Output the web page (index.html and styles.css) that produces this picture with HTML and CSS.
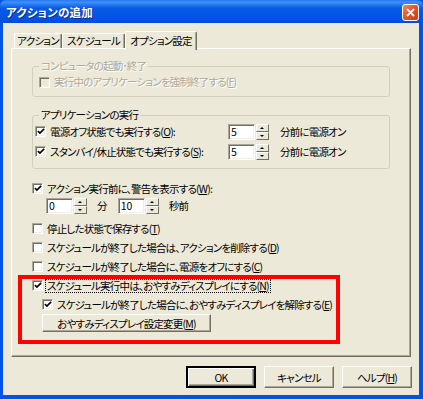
FILE: index.html
```html
<!DOCTYPE html>
<html lang="ja">
<head>
    <meta charset="UTF-8">
    <title>アクションの追加</title>
    <link rel="stylesheet" href="styles.css">
</head>
<body>
    <div class="window">
        <div class="titlebar">
            <span class="title">アクションの追加</span>
            <span class="close">
                <svg width="9" height="9" viewBox="0 0 9 9"><path d="M1 1 L8 8 M8 1 L1 8" stroke="#fff" stroke-width="1.8"/></svg>
            </span>
        </div>

        <div class="client">
            <div class="tabs">
                <div class="tab tab-1">アクション</div>
                <div class="tab tab-2">スケジュール</div>
                <div class="tab active">オプション設定</div>
            </div>

            <div class="panel">
                <!-- 無効なグループ -->
                <fieldset class="group group-off">
                    <legend>コンピュータの起動･終了</legend>
                    <div class="row indent-2">
                        <span class="cb off"></span>
                        <span class="text">実行中のアプリケーションを強制終了する(<u>F</u>)</span>
                    </div>
                </fieldset>

                <fieldset class="group group-app">
                    <legend>アプリケーションの実行</legend>
                    <div class="row spin-row">
                        <div class="label">
                            <span class="cb"><svg width="9" height="9" viewBox="0 0 9 9"><path d="M1 4 L3.3 6.3 L8 1.6" stroke="#000" stroke-width="1.9" fill="none"/></svg></span>
                            <span class="text">電源オフ状態でも実行する(<u>O</u>):</span>
                        </div>
                        <div class="spin"><span class="spin-input">5</span><span class="spin-btns"><i class="up"></i><i class="down"></i></span></div>
                        <span class="after">分前に電源オン</span>
                    </div>
                    <div class="row spin-row">
                        <div class="label">
                            <span class="cb"><svg width="9" height="9" viewBox="0 0 9 9"><path d="M1 4 L3.3 6.3 L8 1.6" stroke="#000" stroke-width="1.9" fill="none"/></svg></span>
                            <span class="text">スタンバイ/休止状態でも実行する(<u>S</u>):</span>
                        </div>
                        <div class="spin"><span class="spin-input">5</span><span class="spin-btns"><i class="up"></i><i class="down"></i></span></div>
                        <span class="after">分前に電源オン</span>
                    </div>
                </fieldset>

                <div class="row warn">
                    <span class="cb"><svg width="9" height="9" viewBox="0 0 9 9"><path d="M1 4 L3.3 6.3 L8 1.6" stroke="#000" stroke-width="1.9" fill="none"/></svg></span>
                    <span class="text">アクション実行前に、警告を表示する(<u>W</u>):</span>
                </div>
                <div class="row time-row">
                    <div class="spin"><span class="spin-input">0</span><span class="spin-btns"><i class="up"></i><i class="down"></i></span></div>
                    <span class="unit">分</span>
                    <div class="spin"><span class="spin-input">10</span><span class="spin-btns"><i class="up"></i><i class="down"></i></span></div>
                    <span class="unit">秒前</span>
                </div>

                <div class="row first">
                    <span class="cb"></span>
                    <span class="text">停止した状態で保存する(<u>T</u>)</span>
                </div>
                <div class="row">
                    <span class="cb"></span>
                    <span class="text">スケジュールが終了した場合は、アクションを削除する(<u>D</u>)</span>
                </div>
                <div class="row">
                    <span class="cb"></span>
                    <span class="text">スケジュールが終了した場合に、電源をオフにする(<u>C</u>)</span>
                </div>
                <div class="row">
                    <span class="cb"><svg width="9" height="9" viewBox="0 0 9 9"><path d="M1 4 L3.3 6.3 L8 1.6" stroke="#000" stroke-width="1.9" fill="none"/></svg></span>
                    <span class="text focus">スケジュール実行中は、おやすみディスプレイにする(<u>N</u>)</span>
                </div>
                <div class="row sub">
                    <span class="cb"><svg width="9" height="9" viewBox="0 0 9 9"><path d="M1 4 L3.3 6.3 L8 1.6" stroke="#000" stroke-width="1.9" fill="none"/></svg></span>
                    <span class="text">スケジュールが終了した場合に、おやすみディスプレイを解除する(<u>E</u>)</span>
                </div>
                <button class="btn sleep-btn">おやすみディスプレイ設定変更(<u>M</u>)</button>
            </div>

            <div class="buttons">
                <button class="btn default">OK</button>
                <button class="btn">キャンセル</button>
                <button class="btn">ヘルプ(<u>H</u>)</button>
            </div>
        </div>

        <!-- 赤い注釈枠 -->
        <div class="mark"></div>
    </div>
</body>
</html>
```

FILE: styles.css
```css
body {
    margin: 0;
    padding: 0;
    font-family: "Noto Sans CJK JP", "Noto Sans", sans-serif;
    font-size: 10.5px;
    letter-spacing: -0.8px;
    font-feature-settings: "palt";
}

.window {
    position: relative;
    width: 423px;
    height: 399px;
    box-sizing: border-box;
    background-color: #0054e3;
    display: flex;
    flex-direction: column;
}

/* タイトルバー */
.titlebar {
    height: 23px;
    display: flex;
    align-items: center;
    justify-content: space-between;
    padding: 0 4px 0 6px;
    background: linear-gradient(#2a7af2 0%, #3d8ff8 10%, #0a5ae8 35%, #0055e5 75%, #004cd8 100%);
    border-radius: 6px 6px 0 0;
}

.title {
    color: #fff;
    font-weight: bold;
    font-size: 11.5px;
    text-shadow: 1px 1px #0a2a8a;
    letter-spacing: 0.2px;
}

.close {
    width: 15px;
    height: 15px;
    margin-top: 1px;
    border: 1px solid #fff;
    border-radius: 3px;
    background: linear-gradient(135deg, #f08a64 0%, #e0582f 45%, #c63c18 100%);
    display: flex;
    align-items: center;
    justify-content: center;
}

.client {
    flex: 1;
    margin: 0 4px 4px 3px;
    padding: 8px 8px 7px 8px;
    background-color: #ece9d8;
    display: flex;
    flex-direction: column;
}

/* タブ */
.tabs {
    display: flex;
    align-items: flex-end;
    height: 17px;
    padding-left: 3px;
    position: relative;
    z-index: 1;
}

.tab {
    height: 15px;
    box-sizing: border-box;
    text-align: center;
    line-height: 14px;
    border-top: 1px solid #fff;
    border-left: 1px solid #fff;
    border-right: 1px solid #716f64;
    box-shadow: inset -1px 0 #aca899;
    border-radius: 2px 2px 0 0;
}

.tab-1 {
    width: 48px;
}

.tab-2 {
    width: 63px;
}

.tab.active {
    width: 72px;
    height: 19px;
    margin-bottom: -2px;
    line-height: 17px;
    background-color: #ece9d8;
}

.panel {
    height: 309px;
    box-sizing: border-box;
    padding: 10px 20px 0 20px;
    border: 1px solid;
    border-color: #fff #716f64 #716f64 #fff;
    box-shadow: inset -1px -1px #aca899;
}

/* グループ枠 */
.group {
    margin: 0;
    padding: 1px 0 0 2px;
    border: 1px solid #d0d0bf;
    border-radius: 3px;
}

.group legend {
    margin-left: 4px;
    padding: 0 2px;
    line-height: 14px;
}

.group-off {
    padding-bottom: 6px;
}

.group-off legend,
.group-off .text {
    color: #aca899;
    text-shadow: 1px 1px #fff;
}

.group-app {
    margin-top: 11px;
    padding-bottom: 8px;
}

.row {
    display: flex;
    align-items: center;
    height: 19px;
}

.group-off .row {
    height: 16px;
}

.indent-2 {
    padding-left: 4px;
}

.spin-row {
    height: 17px;
}

.spin-row + .spin-row {
    margin-top: 3px;
}

.label {
    width: 193px;
    display: flex;
    align-items: center;
}

.after {
    margin-left: 11px;
}

/* チェックボックス */
.cb {
    width: 11px;
    height: 11px;
    box-sizing: border-box;
    flex: none;
    background-color: #fff;
    border: 1px solid;
    border-color: #aca899 #fff #fff #aca899;
    box-shadow: inset 1px 1px #716f64, inset -1px -1px #f1efe2;
    display: flex;
    align-items: center;
    justify-content: center;
}

.cb svg {
    margin: 0 0 0 1px;
}

.cb.off {
    background-color: #ece9d8;
}

.text {
    margin-left: 3px;
    padding: 0 1px;
    line-height: 12px;
    white-space: nowrap;
}

.focus {
    outline: 1px dotted #000;
}

.warn {
    margin-top: 11px;
    height: 17px;
}

.time-row {
    height: 17px;
    padding-left: 14px;
}

.unit {
    margin: 0 11px 0 10px;
}

.first {
    margin-top: 5px;
}

.sub {
    padding-left: 10px;
}

/* スピンボタン */
.spin {
    display: flex;
    align-items: stretch;
    height: 16px;
}

.spin-input {
    width: 27px;
    box-sizing: border-box;
    background-color: #fff;
    border: 1px solid;
    border-color: #aca899 #fff #fff #aca899;
    box-shadow: inset 1px 1px #716f64, inset -1px -1px #f1efe2;
    padding-left: 2px;
    line-height: 14px;
    letter-spacing: 0;
}

.spin-btns {
    width: 13px;
    margin-left: 1px;
    display: flex;
    flex-direction: column;
}

.spin-btns i {
    flex: 1;
    position: relative;
    background-color: #ece9d8;
    border: 1px solid;
    border-color: #fff #716f64 #716f64 #fff;
}

.spin-btns i::after {
    content: "";
    position: absolute;
    left: 3px;
    top: 2px;
    border-left: 2px solid transparent;
    border-right: 2px solid transparent;
}

.spin-btns .up::after {
    border-bottom: 2px solid #000;
}

.spin-btns .down::after {
    border-top: 2px solid #000;
}

/* ボタン */
.btn {
    font: inherit;
    letter-spacing: inherit;
    color: #000;
    margin: 0;
    padding: 0;
    background-color: #ece9d8;
    border: 1px solid;
    border-color: #fff #716f64 #716f64 #fff;
    box-shadow: inset -1px -1px #aca899;
}

.sleep-btn {
    display: block;
    margin-left: 10px;
    width: 169px;
    height: 18px;
}

.buttons {
    display: flex;
    justify-content: flex-end;
    gap: 8px;
    margin-top: 9px;
    margin-right: -1px;
}

.buttons .btn {
    width: 70px;
    height: 22px;
}

.buttons .default {
    border-width: 2px;
    border-color: #000;
    box-shadow: inset 1px 1px #fff, inset -1px -1px #716f64, inset -2px -2px #aca899;
}

/* 注釈の赤枠 */
.mark {
    position: absolute;
    left: 18px;
    top: 275px;
    width: 322px;
    height: 69px;
    box-sizing: border-box;
    border: 4px solid #f00;
}
```
